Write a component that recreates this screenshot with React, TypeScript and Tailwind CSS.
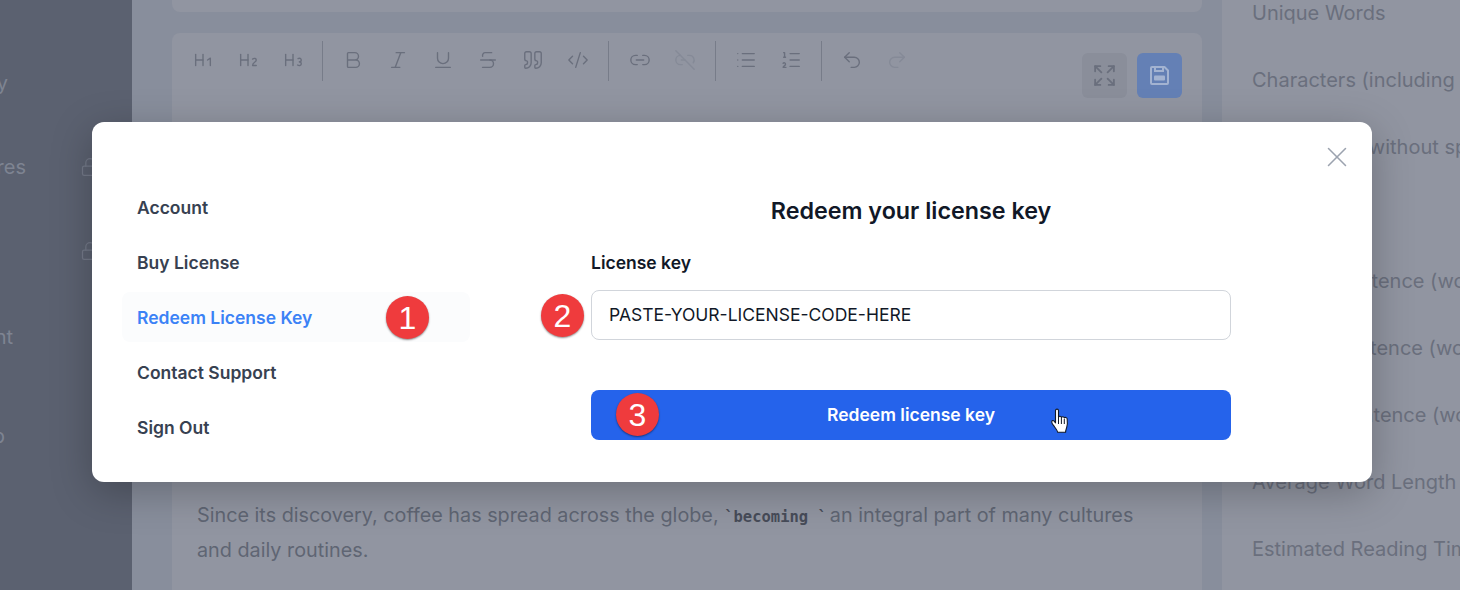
import {
  Bold,
  CodeXml,
  Expand,
  Heading1,
  Heading2,
  Heading3,
  Italic,
  Link2,
  Link2Off,
  List,
  ListOrdered,
  Lock,
  Quote,
  Redo2,
  Strikethrough,
  Underline,
  Undo2,
  X,
} from "lucide-react";
import { Fragment } from "react";

const toolbarGroups = [
  {
    divider: "",
    items: [{ icon: Heading1 }, { icon: Heading2 }, { icon: Heading3 }],
  },
  {
    divider: "mx-[7px]",
    items: [
      { icon: Bold },
      { icon: Italic },
      { icon: Underline },
      { icon: Strikethrough },
      { icon: Quote },
      { icon: CodeXml },
    ],
  },
  {
    divider: "mx-[8px]",
    items: [{ icon: Link2 }, { icon: Link2Off, disabled: true }],
  },
  {
    divider: "mx-[7.5px]",
    items: [{ icon: List }, { icon: ListOrdered }],
  },
  {
    divider: "mx-[7.5px]",
    items: [{ icon: Undo2 }, { icon: Redo2, disabled: true }],
  },
];

const stats = [
  "Unique Words",
  "Characters (including spaces)",
  "Characters (without spaces)",
  "Sentences",
  "Average Sentence (words)",
  "Longest Sentence (words)",
  "Shortest Sentence (words)",
  "Average Word Length",
  "Estimated Reading Time",
];

// sidebar is cut off by the left edge, only the tail of each label shows
const sidebarItems = [
  { label: "History", top: "mt-[69px]", width: "w-[8px]" },
  { label: "Features", top: "mt-[56px]", width: "w-[26px]", locked: true },
  { label: "Library", top: "mt-[56px]", width: "w-[0px]", locked: true },
  { label: "Account", top: "mt-[58px]", width: "w-[13px]" },
  { label: "Help", top: "mt-[71px]", width: "w-[5px]" },
];

const menuItems = ["Account", "Buy License", "Redeem License Key", "Contact Support", "Sign Out"];

function Step({ n, className }: { n: number; className: string }) {
  return (
    <div
      className={`absolute flex h-[43px] w-[43px] items-center justify-center rounded-full bg-[#ef3b3d] font-['Liberation_Sans',sans-serif] text-[32px] text-white shadow-[0_1px_2px_rgba(0,0,0,0.45)] ${className}`}
    >
      {n}
    </div>
  );
}

function SaveIcon() {
  return (
    <svg width="21" height="21" viewBox="0 0 21 21" fill="none" stroke="#a3b3d1" strokeWidth="2">
      <path d="M2 3a1 1 0 0 1 1-1h12.500L19 5.500V18a1 1 0 0 1-1 1H3a1 1 0 0 1-1-1z" strokeLinejoin="round" />
      <path d="M6 2v4h8V2" />
      <rect x="5" y="10.500" width="11" height="5" rx="1" fill="#a3b3d1" stroke="none" />
    </svg>
  );
}

function HandCursor() {
  return (
    <svg className="absolute left-[1051px] top-[408px]" width="19" height="26" viewBox="0 0 19 26">
      <path
        d="M4.500 2.500c0-1.900 3-1.900 3 0v6.700c.5-1.300 2.600-1.300 2.900.3.500-1.200 2.600-1.100 2.900.5.600-1 2.700-.8 2.900 1 .3 2.800.3 6-.5 8.400-.6 2-1.100 3.200-1.100 4.900H6.700c-.5-2.300-2.300-3.900-3.700-6.300C2.100 17.200.800 15.100.700 14c-.1-1.500 1.500-1.900 2.500-.8l1.300 1.600z"
        fill="white"
        stroke="#111827"
        strokeWidth="1.100"
        strokeLinejoin="round"
      />
      <path d="M7.500 9v7M10.400 9.500v6.500M13.300 11v5" stroke="#111827" strokeWidth="1" fill="none" />
    </svg>
  );
}

export default function App() {
  return (
    <div className="relative flex h-[590px] w-[1460px] overflow-hidden bg-[#888e9c] font-['Inter',sans-serif]">
      {/* sidebar */}
      <aside className="flex w-[132px] shrink-0 flex-col bg-[#5b6170] text-[20px] leading-[28px] text-[#7e8492]">
        {sidebarItems.map((item) => (
          <div key={item.label} className={`flex items-center ${item.top}`}>
            <div className={`flex justify-end overflow-hidden ${item.width}`}>
              <span className="whitespace-nowrap">{item.label}</span>
            </div>
            {item.locked && <Lock size={20} strokeWidth={1.5} className="absolute left-[80px] text-[#737988]" />}
          </div>
        ))}
      </aside>

      {/* editor column */}
      <main className="flex w-[1070px] shrink-0 flex-col gap-[21px] pl-[40px]">
        <div className="h-3 w-[1030px] rounded-b-lg bg-[#9195a1]" />
        <section className="flex w-[1030px] flex-1 flex-col rounded-t-lg bg-[#9195a1]">
          <div className="flex items-start pl-[8px] pr-[20px] pt-[8px]">
            {toolbarGroups.map((group, i) => (
              <Fragment key={i}>
                {i > 0 && <div className={`h-[40px] w-px bg-[#777c89] ${group.divider}`} />}
                {group.items.map(({ icon: Icon, disabled }: any, j) => (
                  <div key={j} className="flex h-[38px] w-[45px] items-center justify-center">
                    <Icon size={22} strokeWidth={1.5} className={disabled ? "text-[#858a97]" : "text-[#6a6f7d]"} />
                  </div>
                ))}
              </Fragment>
            ))}
            <div className="ml-auto mt-[12px] flex gap-[10px]">
              <div className="flex h-[45px] w-[45px] items-center justify-center rounded-md bg-[#8a8e9a]">
                <Expand size={25} strokeWidth={1.75} className="text-[#6a6f7d]" />
              </div>
              <div className="flex h-[45px] w-[45px] items-center justify-center rounded-md bg-[#6480b5]">
                <SaveIcon />
              </div>
            </div>
          </div>
          <p className="mt-[400px] w-[975px] pl-[25px] text-[19.8px] leading-[35px] text-[#5f6573]">
            Since its discovery, coffee has spread across the globe,{" "}
            <code className="mr-[3px] font-['DejaVu_Sans_Mono',monospace] text-[15.5px] font-bold leading-none text-[#474c59]">
              `becoming `
            </code>
            an integral part of many cultures and daily routines.
          </p>
        </section>
      </main>

      {/* stats panel */}
      <aside className="ml-[20px] flex flex-1 flex-col overflow-hidden bg-[#9195a1] pl-[30px] text-[20px] leading-[28px] text-[#6a6f7d]">
        <div className="-mt-[1px] flex flex-col gap-[39px]">
          {stats.map((s) => (
            <div key={s} className="whitespace-nowrap">
              {s}
            </div>
          ))}
        </div>
      </aside>

      {/* license modal */}
      <div className="absolute left-[92px] top-[122px] flex h-[360px] w-[1280px] rounded-xl bg-white pl-[30px] pt-[60px] shadow-[0_10px_40px_rgba(0,0,0,0.25)]">
        <button className="absolute right-[18px] top-[18px] text-[#9ca3af]">
          <X size={34} strokeWidth={1.1} />
        </button>
        <nav className="flex w-[348px] flex-col gap-[5px]">
          {menuItems.map((item) => {
            const active = item === "Redeem License Key";
            return (
              <div
                key={item}
                className={`flex h-[50px] items-center rounded-lg px-[15px] pt-[2px] text-[17.5px] font-semibold ${
                  active ? "bg-[#fbfcfd] text-[#3b82f6]" : "text-[#374151]"
                }`}
              >
                {item}
              </div>
            );
          })}
        </nav>
        <div className="ml-[121px] flex w-[640px] flex-col">
          <h2 className="mt-[13px] text-center text-[23.3px] font-semibold leading-[32px] text-[#111827]">
            Redeem your license key
          </h2>
          <label className="mt-[24px] text-[17.5px] font-semibold leading-[24px] text-[#111827]">License key</label>
          <div className="mt-[15px] flex h-[50px] items-center rounded-lg border border-[#d1d5db] bg-white px-[17px] text-[17.5px] text-[#111827]">
            PASTE-YOUR-LICENSE-CODE-HERE
          </div>
          <button className="mt-[50px] h-[50px] rounded-lg bg-[#2563eb] text-[17.5px] font-semibold text-white">
            Redeem license key
          </button>
        </div>
      </div>

      {/* tutorial markers */}
      <Step n={1} className="left-[386px] top-[296px]" />
      <Step n={2} className="left-[541px] top-[294px]" />
      <Step n={3} className="left-[616px] top-[393px]" />
      <HandCursor />
    </div>
  );
}
